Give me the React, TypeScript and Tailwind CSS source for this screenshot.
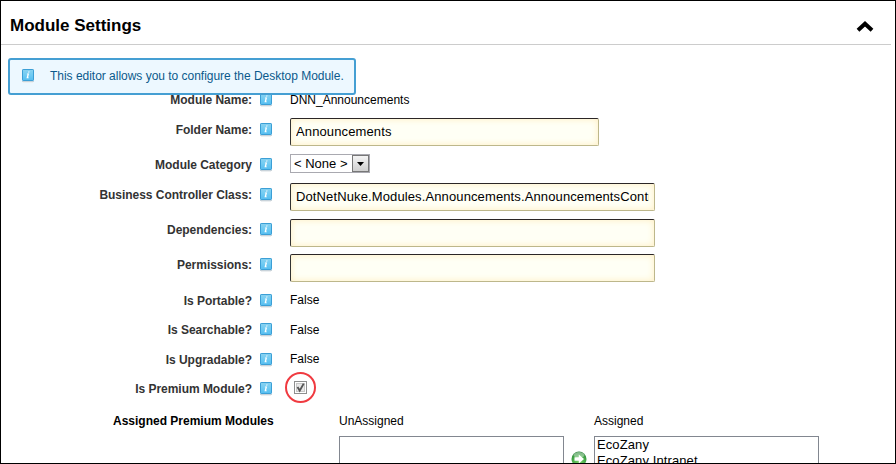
import type { ReactNode } from 'react';

function InfoIcon() {
  return (
    <svg width="12" height="14" viewBox="0 0 12 14" className="block shrink-0">
      <defs>
        <linearGradient id="info" x1="0" y1="0" x2="0" y2="1">
          <stop offset="0" stopColor="#8ad2f0" />
          <stop offset="0.5" stopColor="#6fcbf3" />
          <stop offset="1" stopColor="#55bdf0" />
        </linearGradient>
      </defs>
      <rect x="0" y="12" width="12" height="1" fill="#c9d3da" />
      <rect x="1" y="13" width="10" height="1" fill="#eceff1" />
      <rect x="0.5" y="0.5" width="11" height="11" rx="0.6" fill="url(#info)" stroke="#3b9fd6" />
      <path d="M6.3 2.4h1.3l-.3 1.2H6zM5 4.5h2.1l-1 3.9h.8l-.2.8H4.5l1-3.9h-.7z" fill="#fff" />
    </svg>
  );
}

function Row({ label, height, labelPad, valuePad, children }: {
  label: string;
  height: string;
  labelPad: string;
  valuePad: string;
  children: ReactNode;
}) {
  return (
    <div className={`flex items-start ${height}`}>
      <div className={`flex w-[271px] shrink-0 justify-end gap-2 ${labelPad}`}>
        <span className="whitespace-nowrap text-[12px] font-bold leading-[18px] tracking-[-0.03px] text-[#333]">{label}</span>
        <span className="pt-[2px]"><InfoIcon /></span>
      </div>
      <div className={`ml-[18px] text-[12px] leading-[18px] text-black ${valuePad}`}>{children}</div>
    </div>
  );
}

function Field({ value, width }: { value: string; width: string }) {
  return (
    <input
      readOnly
      value={value}
      className={`block h-7 rounded-[2px] border border-b-[#bdb78b] border-l-[#333] border-r-[#bdb78b] border-t-[#2b2626] bg-[#fffff5] px-[5px] pb-[2px] text-[13px] tracking-[0.12px] text-black shadow-[inset_0_0_7px_#ffeec0] outline-none ${width}`}
    />
  );
}

function ListBox({ items }: { items: string[] }) {
  return (
    <div className="h-20 w-[225px] border border-[#828790] bg-white pl-[2px] text-[13px] leading-4 tracking-[0.1px]">
      {items.map((item) => <div key={item}>{item}</div>)}
    </div>
  );
}

export default function App() {
  return (
    <div className="relative h-[464px] w-[896px] overflow-hidden border border-black bg-white font-['Liberation_Sans',Arial,sans-serif]">
      <header className="mr-[4px] flex h-11 items-center justify-between border-b border-[#ccc] pl-[9px] pr-[17px]">
        <h2 className="pt-[7px] text-[17px] font-bold leading-6 text-black">Module Settings</h2>
        <svg width="18" height="13" viewBox="0 0 18 13" className="mt-2">
          <path d="M2 10.2 9 3.8l7 6.4" fill="none" stroke="#000" strokeWidth="4" />
        </svg>
      </header>

      <div className="absolute left-[7px] top-[57px] z-10 flex h-[37px] w-[348px] items-start rounded-[3px] border-2 border-[#459fd3] bg-[#edf8ff] pl-3 pt-[9px] text-[12px] leading-[14px] text-[#0b5a8c]">
        <InfoIcon />
        <span className="ml-4 whitespace-nowrap tracking-[-0.02px]">This editor allows you to configure the Desktop Module.</span>
      </div>

      <main className="pt-[46px]">
        <Row label="Module Name:" height="h-[26px]" labelPad="pt-0" valuePad="pt-0">DNN_Announcements</Row>
        <Row label="Folder Name:" height="h-[36px]" labelPad="pt-1" valuePad="pt-px">
          <Field value="Announcements" width="w-[309px]" />
        </Row>
        <Row label="Module Category" height="h-[29px]" labelPad="pt-[3px]" valuePad="pt-px">
          <div className="flex h-[19px] w-20 items-stretch justify-between border border-[#a9a9b0] bg-white pl-[3px] text-[13px] leading-[17px]">
            <span className="whitespace-nowrap">&lt; None &gt;</span>
            <span className="flex w-[17px] items-center justify-center border border-[#777] bg-linear-to-b from-[#f4f4f4] to-[#cfcfcf]">
              <svg width="7" height="4" viewBox="0 0 7 4"><path d="M0 0h7L3.5 4z" /></svg>
            </span>
          </div>
        </Row>
        <Row label="Business Controller Class:" height="h-[36px]" labelPad="pt-1" valuePad="pt-px">
          <Field value="DotNetNuke.Modules.Announcements.AnnouncementsController" width="w-[365px]" />
        </Row>
        <Row label="Dependencies:" height="h-[35px]" labelPad="pt-[3px]" valuePad="pt-px">
          <Field value="" width="w-[365px]" />
        </Row>
        <Row label="Permissions:" height="h-[35px]" labelPad="pt-[3px]" valuePad="pt-px">
          <Field value="" width="w-[365px]" />
        </Row>
        <Row label="Is Portable?" height="h-[29px]" labelPad="pt-1" valuePad="pt-[3px]">False</Row>
        <Row label="Is Searchable?" height="h-[30px]" labelPad="pt-1" valuePad="pt-1">False</Row>
        <Row label="Is Upgradable?" height="h-[29px]" labelPad="pt-1" valuePad="pt-[3px]">False</Row>
        <Row label="Is Premium Module?" height="h-[36px]" labelPad="pt-1" valuePad="pt-0">
          <svg width="31" height="31" viewBox="0 0 31 31" className="-ml-[5px] -mt-[4px] block">
            <circle cx="15.5" cy="15.5" r="14.5" fill="none" stroke="#f03a40" strokeWidth="2" />
            <rect x="9.5" y="9.5" width="12" height="12" fill="#fff" stroke="#8e8f8f" />
            <rect x="11.5" y="11.5" width="8" height="8" fill="#e8e8e8" stroke="#c8c8c8" />
            <path d="m12.5 15 2.2 3.6 4-7" fill="none" stroke="#555" strokeWidth="1.9" />
          </svg>
        </Row>

        <section className="flex items-start text-[12px] leading-[18px] text-black">
          <h3 className="w-[226px] shrink-0 pl-[112px] font-bold whitespace-nowrap">Assigned Premium Modules</h3>
          <div className="ml-[112px] w-[225px]">
            <div className="h-6">UnAssigned</div>
            <ListBox items={[]} />
          </div>
          <svg width="16" height="16" viewBox="0 0 16 16" className="ml-[7px] mt-[39px] shrink-0">
            <defs>
              <radialGradient id="move" cx="0.5" cy="0.75" r="0.75">
                <stop offset="0" stopColor="#7cd36a" />
                <stop offset="0.65" stopColor="#43a647" />
                <stop offset="1" stopColor="#257c35" />
              </radialGradient>
            </defs>
            <circle cx="8" cy="8" r="7.5" fill="url(#move)" />
            <ellipse cx="8" cy="4" rx="5.5" ry="3" fill="#fff" opacity="0.4" />
            <path d="M3.5 6.2h4.3V3.4L13 8l-5.2 4.6V9.8H3.5z" fill="#fff" />
          </svg>
          <div className="ml-[7px] w-[225px]">
            <div className="h-6">Assigned</div>
            <ListBox items={['EcoZany', 'EcoZany Intranet']} />
          </div>
        </section>
      </main>
    </div>
  );
}
